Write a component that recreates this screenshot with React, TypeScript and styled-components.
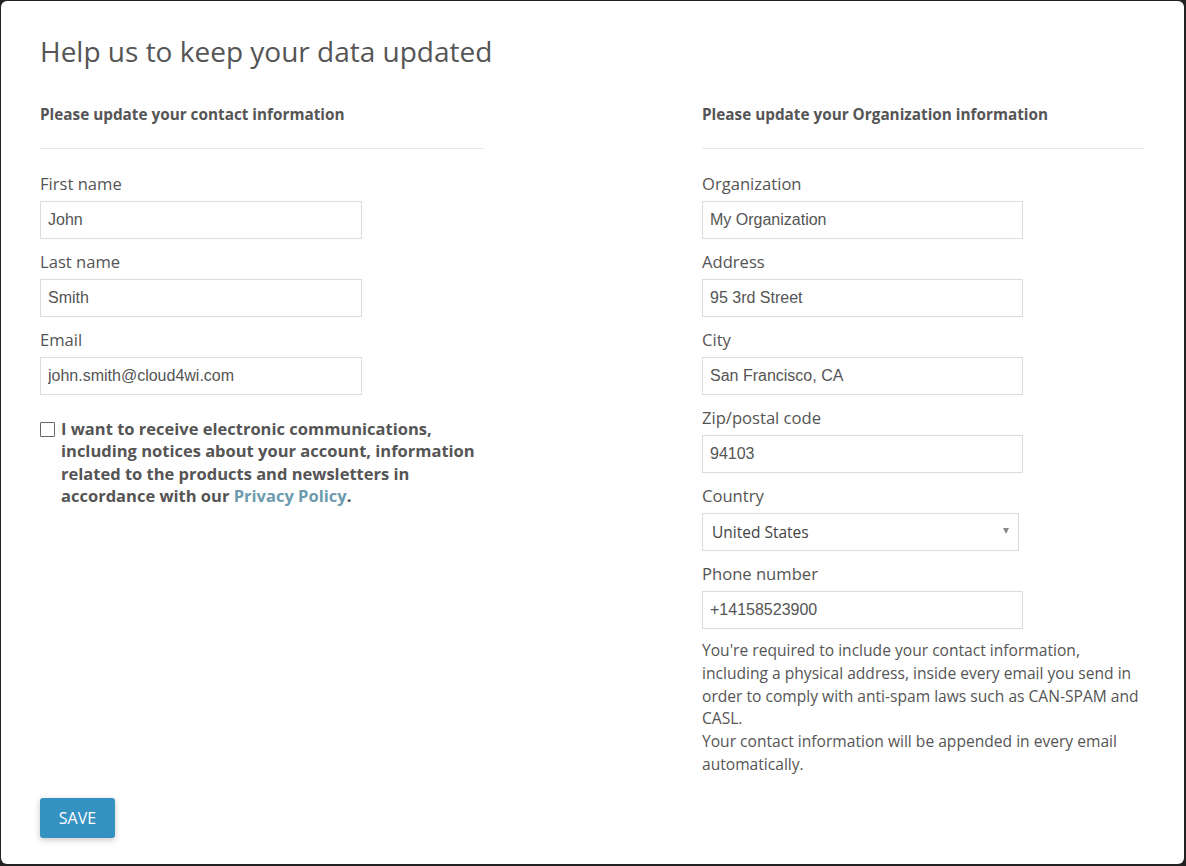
import React from "react";
import styled, { createGlobalStyle } from "styled-components";

const GlobalStyle = createGlobalStyle`
  html, body {
    margin: 0;
    padding: 0;
    background: #222;
  }
  * {
    box-sizing: border-box;
  }
`;

const Card = styled.div`
  margin: 1px 2px 2px 1px;
  height: 863px;
  background: #fff;
  border-radius: 6px;
  padding: 30px 39px 26px 39px;
  display: flex;
  flex-direction: column;
  font-family: "Open Sans", sans-serif;
  color: #555;
`;

const Title = styled.h1`
  margin: 0;
  font-size: 28px;
  font-weight: 400;
  line-height: 40px;
  color: #555;
`;

const Columns = styled.div`
  flex: 1;
  display: grid;
  grid-template-columns: 444px 443px;
  justify-content: space-between;
  margin-top: 33px;
`;

const Column = styled.div`
  display: flex;
  flex-direction: column;
`;

const SectionHeading = styled.h2`
  margin: 0 0 24px;
  padding-bottom: 24px;
  border-bottom: 1px solid #e8e8e8;
  font-size: 15.3px;
  font-weight: 700;
  line-height: 20px;
  color: #555;
`;

const Field = styled.div`
  display: flex;
  flex-direction: column;
  margin-bottom: 12px;
`;

const Label = styled.label`
  font-size: 16.6px;
  line-height: 22px;
  margin-bottom: 6px;
  color: #555;
`;

const TextInput = styled.input<{ $width?: number }>`
  width: ${(p) => p.$width ?? 321}px;
  height: 38px;
  border: 1px solid #dcdcdc;
  border-radius: 0;
  padding: 0 7px;
  font-family: "Liberation Sans", Arial, sans-serif;
  font-size: 16px;
  color: #555;
  background: #fff;
  outline: none;
`;

const SelectBox = styled.div`
  position: relative;
  width: 317px;
  height: 38px;
  border: 1px solid #dcdcdc;
  display: flex;
  align-items: center;
  padding: 0 9px;
  font-size: 15.5px;
  color: #444;
`;

const Caret = styled.span`
  position: absolute;
  right: 9px;
  top: 14px;
  width: 0;
  height: 0;
  border-left: 3.5px solid transparent;
  border-right: 3.5px solid transparent;
  border-top: 6px solid #888;
`;

const ConsentRow = styled.div`
  display: flex;
  align-items: flex-start;
  gap: 6px;
  margin-top: 11px;
  width: 440px;
  font-size: 16.5px;
  font-weight: 700;
  line-height: 22.3px;
  color: #555;
`;

const CheckBox = styled.span`
  flex: none;
  width: 15px;
  height: 15px;
  margin-top: 4px;
  border: 1px solid #666;
  border-radius: 1px;
  background: #fff;
`;

const ConsentText = styled.p`
  margin: 0;
`;

const Link = styled.a`
  color: #6d9bae;
  text-decoration: none;
`;

const HelpText = styled.p`
  margin: -2px 0 0;
  font-size: 15.6px;
  line-height: 22.8px;
  color: #555;
`;

const Footer = styled.div`
  display: flex;
`;

const SaveButton = styled.button`
  width: 75px;
  height: 40px;
  border: none;
  border-radius: 3px;
  background: #3591bf;
  color: #fff;
  font-family: "Open Sans", sans-serif;
  font-size: 16px;
  text-transform: uppercase;
  box-shadow: 0 2px 6px rgba(0, 0, 0, 0.22);
  cursor: pointer;
`;

const contactFields = [
  { label: "First name", value: "John" },
  { label: "Last name", value: "Smith" },
  { label: "Email", value: "john.smith@cloud4wi.com" },
];

const orgFields = [
  { label: "Organization", value: "My Organization" },
  { label: "Address", value: "95 3rd Street" },
  { label: "City", value: "San Francisco, CA" },
  { label: "Zip/postal code", value: "94103" },
];

const App: React.FC = () => {
  return (
    <>
      <GlobalStyle />
      <Card>
        <Title>Help us to keep your data updated</Title>
        <Columns>
          <Column>
            <SectionHeading>Please update your contact information</SectionHeading>
            {contactFields.map((f) => (
              <Field key={f.label}>
                <Label>{f.label}</Label>
                <TextInput $width={322} defaultValue={f.value} />
              </Field>
            ))}
            <ConsentRow>
              <CheckBox />
              <ConsentText>
                I want to receive electronic communications, including notices
                about your account, information related to the products and
                newsletters in accordance with our{" "}
                <Link href="#">Privacy Policy</Link>.
              </ConsentText>
            </ConsentRow>
          </Column>

          <Column>
            <SectionHeading>Please update your Organization information</SectionHeading>
            {orgFields.map((f) => (
              <Field key={f.label}>
                <Label>{f.label}</Label>
                <TextInput defaultValue={f.value} />
              </Field>
            ))}
            <Field>
              <Label>Country</Label>
              <SelectBox>
                United States
                <Caret />
              </SelectBox>
            </Field>
            <Field>
              <Label>Phone number</Label>
              <TextInput defaultValue="+14158523900" />
            </Field>
            <HelpText>
              You're required to include your contact information, including a
              physical address, inside every email you send in order to comply
              with anti-spam laws such as CAN-SPAM and CASL.
              <br />
              Your contact information will be appended in every email
              automatically.
            </HelpText>
          </Column>
        </Columns>
        <Footer>
          <SaveButton>Save</SaveButton>
        </Footer>
      </Card>
    </>
  );
};

export default App;
